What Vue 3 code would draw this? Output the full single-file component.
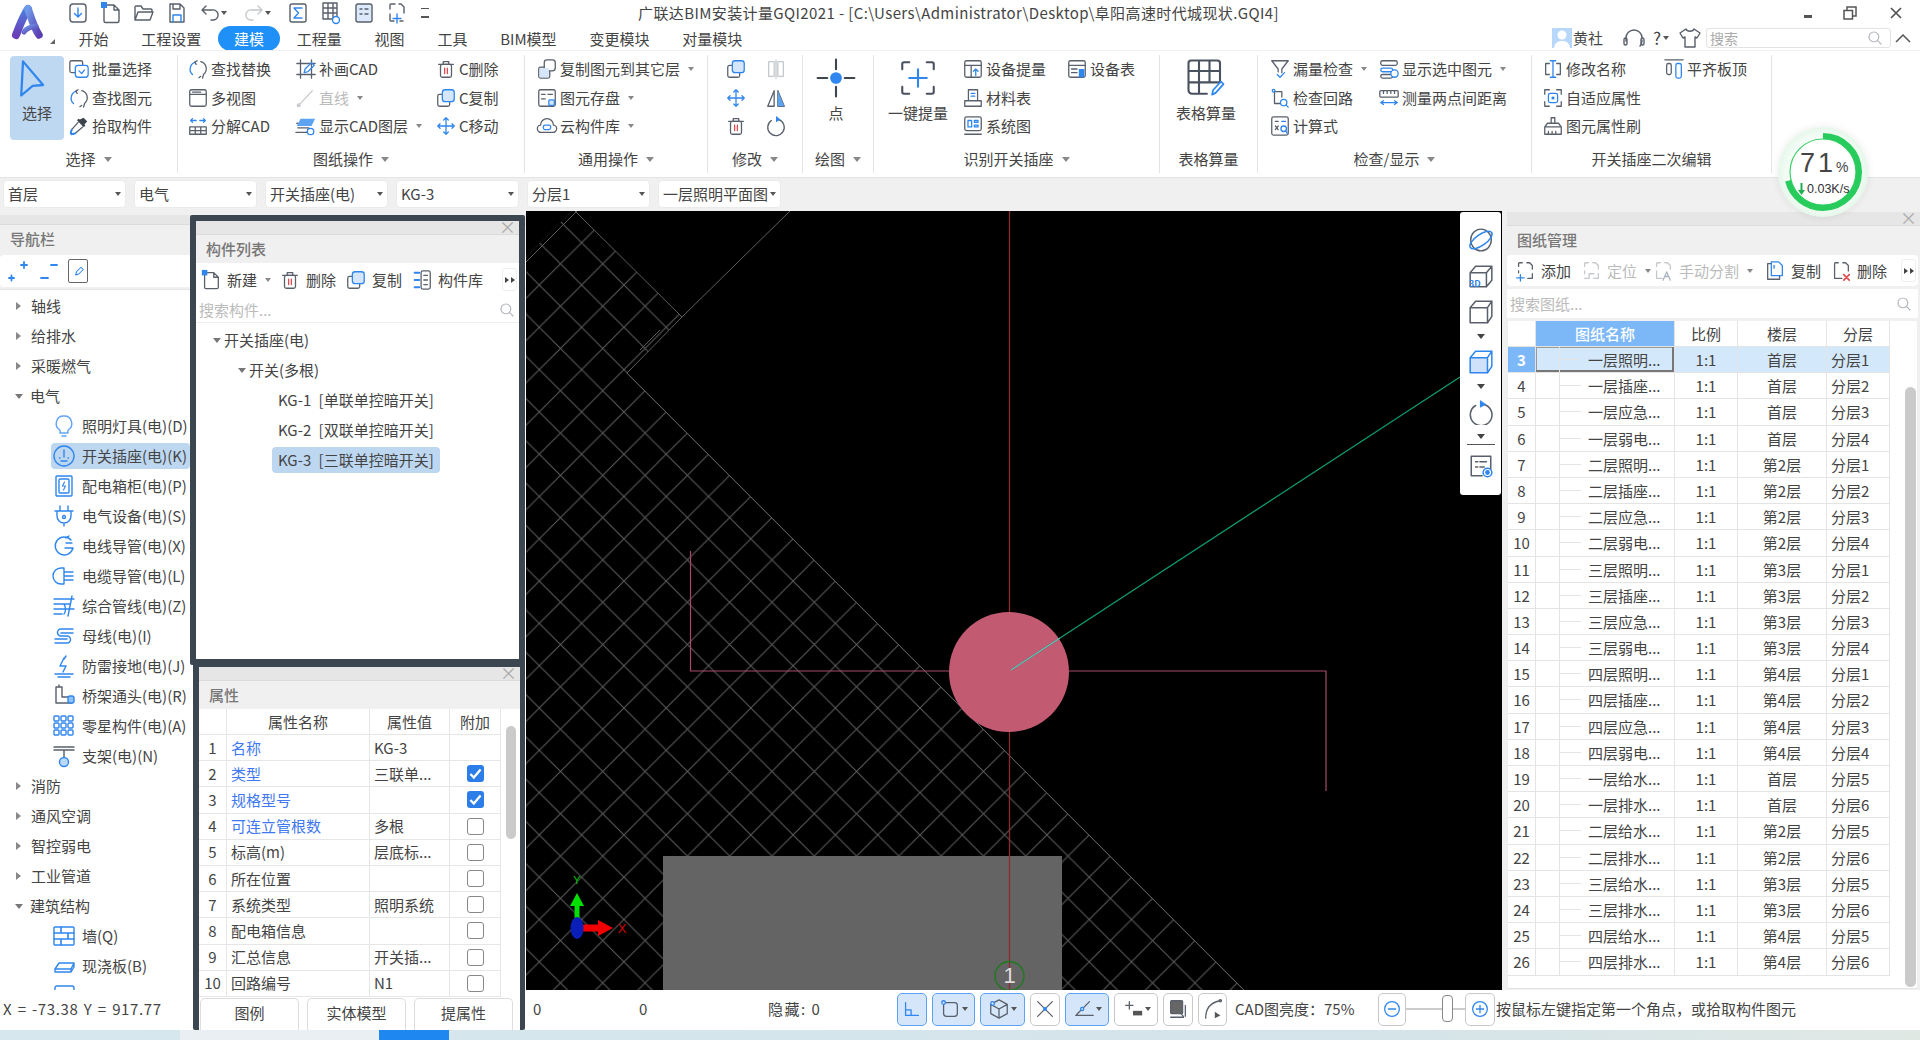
<script setup>
const G = '#59606b', B = '#2f86ee', L = '#c4c8cc', R = '#e5484d'
const s = (d, c = G, w = 1.4) => `<path d="${d}" fill="none" stroke="${c}" stroke-width="${w}" stroke-linecap="round" stroke-linejoin="round"/>`
const f = (d, c = B) => `<path d="${d}" fill="${c}"/>`
const r = (x, y, w, h, rx = 2, c = G, fill = 'none', sw = 1.4) => `<rect x="${x}" y="${y}" width="${w}" height="${h}" rx="${rx}" fill="${fill}" stroke="${c}" stroke-width="${sw}"/>`
const c = (x, y, rad, col = B, fill = 'none', sw = 1.4) => `<circle cx="${x}" cy="${y}" r="${rad}" fill="${fill}" stroke="${col}" stroke-width="${sw}"/>`
const trash = r(6, 7, 12, 14, 2) + s('M4 7h16M9 7V4h6v3') + s('M10.5 11v6M13.5 11v6', R)
const copy = r(3, 8, 13, 13, 2) + r(8, 3, 13, 13, 3, B, '#d5e6fb')
const move = s('M12 3v18M3 12h18M9.5 5.5 12 3l2.5 2.5M9.5 18.5 12 21l2.5-2.5M5.5 9.5 3 12l2.5 2.5M18.5 9.5 21 12l-2.5 2.5', B)
const loop = s('M9 4.5A8 8 0 0 0 6 18', B) + s('M15 4a8 8 0 0 1 3 14M15 20l-2 1.5M17 22l1-4') + s('M11 3 8.5 4.5 10 7', G)
const icons = {
  dl: r(4, 3, 16, 18, 3) + s('M12 7v9M8.5 12.5 12 16l3.5-3.5', B),
  newdoc: s('M5 4h10l5 5v11a1.5 1.5 0 0 1-1.5 1.5h-12A1.5 1.5 0 0 1 5 20zM15 4v5h5') + f('M2 1h6v6H2z'),
  open: s('M3 19V6a1 1 0 0 1 1-1h5l2 3h8a1 1 0 0 1 1 1v2M3 19l3-8h15l-3 8z'),
  save: s('M5 3h10l4 4v14H5zM8 3v5h7V3') + s('M8 21v-7h8v7', B),
  undo: s('M8 5 4 9l4 4M4 9h10a5 5 0 0 1 2 10h-3'),
  redo: s('M16 5l4 4-4 4M20 9H10a5 5 0 0 0-2 10h3', L),
  sigma: r(4, 3, 16, 18, 2) + s('M16 7H8l4.5 5L8 17h8', B),
  gridc: s('M4 2h14v16H4zM4 7h14M4 12h14M9 2v16M14 2v16') + c(17, 19, 3.5, B, '#fff'),
  panel: r(4, 3, 16, 18, 2, G, '#dbe9fa') + s('M8 8h2M13 8h3M8 13h2M13 13h3'),
  scan: s('M10 3H6a1 1 0 0 0-1 1v4M14 3h2l3 3v6M5 13v6a1 1 0 0 0 1 1h3M15 20h3') + s('M12 13v9M8 17.5h8', B),
  batch: r(2, 3, 14, 13, 2) + r(8, 8, 14, 13, 3, B, '#fff') + s('M12 14l3 3 3-4', B),
  find: loop,
  pick: f('M17 3l4 4-3 3 1 2-2 1-7-7 1-2 2 1z', '#3c434d') + s('M11 8 4 16l-1 4 1 1 4-1 8-7') + s('M4 16l-1 4 1 1 4-1', B, 2),
  multi: r(3, 3, 18, 18, 2) + s('M3 8h18M6 5.5h9'),
  explode: s('M3 13h18v8H3zM3 17h18M9 13v8M15 13v8') + s('M4 6h6M4 6l2-2M4 6l2 2M20 6h-6M20 6l-2-2M20 6l-2 2', B),
  addcad: s('M6 2v20M18 2v20M2 6h20M2 18h20') + s('M10 16l1-4 7-7 3 3-7 7z', B),
  line: s('M4 20 19 4', L) + c(4, 20, 1.5, L),
  layers: f('M6 4h16l-4 8H2z', '#5ca3f2') + s('M3 14h12l-2 5H1M3 9h-1') + c(17, 18, 3.5, B, '#fff'),
  trash,
  copy,
  move,
  copyto: r(3, 10, 12, 12, 2) + r(9, 2, 12, 12, 3, G, '#fff') + f('M4 11h10v10H4z', '#d5e6fb'),
  save2: r(3, 3, 18, 18, 2) + s('M6 8h4M13 8h5M6 13h4') + r(14, 14, 6, 6, 1, B, '#d5e6fb'),
  cloud: s('M6 19a4 4 0 0 1-1-8 7 7 0 0 1 14 0 4 4 0 0 1-1 8z') + r(8, 11, 8, 5, 2, B),
  mirror: s('M10 21H3L10 4zM14 21h7L14 4z') + f('M14 21h7L14 4z', '#5ca3f2'),
  rotate: s('M7 6a9 9 0 1 0 8-1') + f('M12 1l5 4-5 3z'),
  disableA: s('M4 4h6v16H4zM14 4h6v16h-6zM12 2v20', L),
  point: s('M24 3v11M24 34v11M3 24h11M34 24h11', '#3f4650', 2.4) + c(24, 24, 6, B, B),
  onekey: s('M6 14V8a2 2 0 0 1 2-2h6M34 6h6a2 2 0 0 1 2 2v6M42 34v6a2 2 0 0 1-2 2h-6M14 42H8a2 2 0 0 1-2-2v-6', '#4a5260', 2.4) + s('M24 14v20M14 24h20', B, 2.4),
  tablecalc: s('M4 38V7a3 3 0 0 1 3-3h30a3 3 0 0 1 3 3v22H4M4 16h36M4 29h24M16 4v38M28 4v25M4 38a4 4 0 0 0 4 4h17', '#4a5260', 2.4) + s('M31 43l1-5 9-10 3 3-9 10z', B, 2),
  arrow: s('M8 5 31 32 19 33 6 44z', B, 2.6),
  devq: r(3, 3, 18, 18, 2) + s('M3 8h18M10 8v13') + s('M15 19v-7M12.5 14.5 15 12l2.5 2.5', B),
  material: s('M7 3h10v12H7zM3 15h18v6H3z') + s('M10 7h4M10 10h4', B),
  sysmap: r(3, 2, 18, 15, 2) + s('M3 21h18') + s('M6.5 6h4v7h-4zM13.5 6h4v2h-4zM13.5 11h4v2h-4z', B),
  devt: r(3, 3, 18, 18, 2) + s('M3 8h18M6 12h6M6 16h6') + f('M14 12h6v9h-6z'),
  filter: s('M3 3h18l-7 9v4M3 3l7 9v3') + s('M9 18l3 3 5-5', B),
  showsel: r(3, 3, 18, 5, 2) + r(3, 11, 13, 4, 2, B) + r(3, 18, 13, 4, 2) + c(18, 17, 4, B, '#fff'),
  circuit: s('M6 5v13h6M6 5h8v6') + c(5, 4, 1.5) + c(16, 17, 3.5, B) + s('M19 20l2 2', B),
  ruler: r(2, 4, 20, 7, 1) + s('M6 4v3M10 4v3M14 4v3M18 4v3') + s('M3 17h18M3 17l3-2M3 17l3 2M21 17l-3-2M21 17l-3 2', B),
  formula: r(3, 2, 18, 20, 2) + s('M7 7h3M7 12l3 4M10 12l-3 4') + c(16, 15, 3, B) + s('M14 7h4M18 17l2 3', B),
  rename: s('M12 3v18M9 3h6M9 21h6', B) + s('M8 6H4v12h4M16 6h4v12h-4'),
  fit: s('M3 8V3h5M16 3h5v5M21 16v5h-5M8 21H3v-5', G) + r(7, 7, 10, 10, 2, B) + f('M10.5 10.5h3v3h-3z'),
  brush: s('M3 21v-8h18v8zM3 13l3-4h12l3 4M10 9V3h4v6M7 18v3M11 18v3M15 18v3'),
  align: s('M2 2h20') + r(4, 6, 5, 12, 2) + r(14, 6, 6, 16, 2, B),
  add2: s('M9 3H6a1 1 0 0 0-1 1v3M14 3h3l3 3v4M20 15v5h-5M5 12v2') + s('M7 16v7M3 19.5h8', B),
  loc: s('M9 3H6a1 1 0 0 0-1 1v3M14 3h3l3 3v4M20 15v5h-5M5 12v3M5 20h4M10 15v5M15 15h-5', L),
  split: s('M9 3H6a1 1 0 0 0-1 1v3M14 3h3l3 3v4M5 12v8h6', L) + s('M12 22l4-9 4 9M14 18h4', '#aab4c0'),
  copy3: s('M8 4h-4v17h13v-4') + s('M8 2h8l4 4v11H8z', B) + s('M11 6v3', B),
  delx: s('M9 3H6a1 1 0 0 0-1 1v16h8M14 3h3l3 3v6') + s('M15 16l6 6M21 16l-6 6', R, 1.8),
  lib: s('M4 4h5M4 12h5M4 20h5', B, 2.2) + r(11, 2, 10, 20, 2) + s('M14 7h4M14 12h4M14 17h4'),
  plus2: s('M3 19h5M5.5 16.5v5M15 6h6M18 3v6', B, 1.8),
  minus2: s('M4 19h7M14 6h6', B, 1.8),
  edit: s('M9 17l1-4 6-6 3 3-6 6z', B) + s('M9 17h2', B),
  orbit: `<ellipse cx="12" cy="12" rx="9.5" ry="10" fill="none" stroke="${G}" stroke-width="1.3"/>` + `<ellipse cx="12" cy="12" rx="12" ry="5" transform="rotate(-35 12 12)" fill="none" stroke="${B}" stroke-width="1.4"/>`,
  cube3d: s('M2 9h15v13H2zM2 9l5-6h15v13l-5 6M17 9l5-6'),
  cube: s('M2 8h16v14H2zM2 8l5-6h15v14l-4 6M18 8l4-6', G),
  cubeb: `<path d="M2 8h16v14H2z" fill="#cfe2fa"/>` + s('M2 8h16v14H2zM2 8l5-6h15v14l-4 6M18 8l4-6', B),
  rot: s('M7 6a10 10 0 1 0 8-1') + f('M11 1l6 4-6 3z'),
  listeye: s('M3 3h18v12M3 3v18h10M7 8h2M11 8h6M7 13h2M11 13h4') + c(18, 18, 4, B) + c(18, 18, 1.5, B, B),
  bulb: s('M12 2a7.5 7.5 0 0 0-4 14v3h8v-3a7.5 7.5 0 0 0-4-14zM10 22h4', '#62a4f2'),
  socket: c(12, 12, 10, B) + s('M12 6v7M7.5 14h.5M16 14h.5M9 17h6', B),
  box: r(4, 2, 16, 20, 1, B) + r(7, 5, 10, 14, 1, B) + s('M12.5 8l-2 4h3l-2 4', B, 1.1),
  plug: s('M8 2v5M16 2v5M3 7h18M5 7v5a7 7 0 0 0 14 0V7M12 19v3', B) + c(12, 13, 1.5, B),
  wire: s('M19 6a9 9 0 1 0 2 8h-8M14 4l3-2M14 9h6', B),
  cable: s('M12 4H9a8 8 0 0 0 0 16h3M12 8h9M12 12h9M12 16h9M12 4v16', B),
  combo: s('M2 5h20M2 10h16M2 15h20M2 20h8M20 2l-4 20M12 10c2 3 2 8 0 10', B),
  bus: s('M21 5H9a3.5 3.5 0 0 0 0 7h6a3.5 3.5 0 0 1 0 7H3M21 9H9M3 15h12', B, 1.5),
  thunder: s('M3 20h18M6 23h12M12 4l-4 8h6l-3 6', B) + s('M14 2l-2 3', B),
  bridge: s('M4 3h6v10h10v6H4zM7 3V1') + r(16, 12, 6, 7, 2, B, '#8fc0f6'),
  parts: [3, 10, 17].flatMap(x => [3, 10, 17].map(y => r(x - 1, y - 1, 5, 5, 1, B))).join(''),
  support: s('M2 3h20M2 6h20M12 6v8', G) + c(12, 18, 4.5, B, '#bcd9fa'),
  wall: r(2, 3, 20, 18, 1, B) + s('M2 9h20M2 15h20M9 3v6M16 9v6M9 15v6', B, 1.6),
  slab: s('M3 15l4-6h15v4l-3 5H3zM3 15h16v3M19 15l3-6', B),
  beam: r(3, 2, 19, 6, 2, B),
  bl: s('M5 5v14h14M5 13h6v6', B),
  snap: r(5, 5, 15, 15, 3) + c(5, 5, 2, B, '#cfe2fa'),
  box3: s('M12 2l9 5v10l-9 5-9-5V7zM3 7l9 5 9-5M12 12v10') + c(5, 6, 2, B, '#cfe2fa'),
  cross: s('M4 4l16 16M20 4 4 20') + f('M10 10h4v4h-4z'),
  angle: s('M3 19h19M4 18 18 4', G) + c(10, 12, 1.7, B, '#cfe2fa'),
  plusbar: s('M4 8h8M8 4v8') + f('M12 14h10v5H12z', '#555'),
  stack: r(4, 3, 13, 14, 1, G, '#666') + s('M4 21h14M20 8v12M14 16l4 4'),
  curve: s('M4 22C4 12 8 5 20 3') + c(20, 3, 1.3, G) + f('M14 15l6 4-6 3z', '#555'),
  minus: c(12, 12, 8, B) + s('M8 12h8', B),
  plus: c(12, 12, 8, B) + s('M8 12h8M12 8v8', B),
  search: c(10.5, 10.5, 6.5, '#b4b8bc', 'none', 1.6) + s('M15.5 15.5 20 20', '#b4b8bc', 1.6),
  headset: s('M4 15v-3a8 8 0 0 1 16 0M18 20a8 8 0 0 0 2-6') + r(2, 12, 3, 7, 1.5) + r(19, 12, 3, 7, 1.5),
  shirt: s('M8 3 2 7l3 5 2-1v10h10V11l2 1 3-5-6-4c-1 3-7 3-8 0z'),
  more: f('M1 4l4 3-4 3zM7 4l4 3-4 3z', '#444'),
}
const item = (i, t, dd, dis) => ({ i, t, dd, dis })
const groups = [
  { w: 178, pl: 10, label: '选择', dd: 1, cols: [
    { w: 58, big: { i: 'arrow', t: '选择', active: 1 } },
    { w: 100, items: [item('batch', '批量选择'), item('find', '查找图元'), item('pick', '拾取构件')] } ] },
  { w: 347, pl: 9, label: '图纸操作', dd: 1, cols: [
    { w: 108, items: [item('find', '查找替换'), item('multi', '多视图'), item('explode', '分解CAD')] },
    { w: 140, items: [item('addcad', '补画CAD'), item('line', '直线', 1, 1), item('layers', '显示CAD图层', 1)] },
    { w: 90, items: [item('trash', 'C删除'), item('copy', 'C复制'), item('move', 'C移动')] } ] },
  { w: 183, pl: 11, label: '通用操作', dd: 1, cols: [
    { w: 170, items: [item('copyto', '复制图元到其它层', 1), item('save2', '图元存盘', 1), item('cloud', '云构件库', 1)] } ] },
  { w: 95, pl: 17, label: '修改', dd: 1, cols: [
    { w: 40, items: [item('copy', ''), item('move', ''), item('trash', '')] },
    { w: 30, items: [item('disableA', ''), item('mirror', ''), item('rotate', '')] } ] },
  { w: 71, pl: 0, label: '绘图', dd: 1, cols: [{ w: 66, big: { i: 'point', t: '点' } }] },
  { w: 286, pl: 0, label: '识别开关插座', dd: 1, cols: [
    { w: 88, big: { i: 'onekey', t: '一键提量' } },
    { w: 104, items: [item('devq', '设备提量'), item('material', '材料表'), item('sysmap', '系统图')] },
    { w: 90, items: [item('devt', '设备表')] } ] },
  { w: 98, pl: 0, label: '表格算量', cols: [{ w: 92, big: { i: 'tablecalc', t: '表格算量' } }] },
  { w: 274, pl: 11, label: '检查/显示', dd: 1, cols: [
    { w: 109, items: [item('filter', '漏量检查', 1), item('circuit', '检查回路'), item('formula', '计算式')] },
    { w: 150, items: [item('showsel', '显示选中图元', 1), item('ruler', '测量两点间距离')] } ] },
  { w: 240, pl: 10, label: '开关插座二次编辑', cols: [
    { w: 121, items: [item('rename', '修改名称'), item('fit', '自适应属性'), item('brush', '图元属性刷')] },
    { w: 100, items: [item('align', '平齐板顶')] } ] },
]
const tabs = ['开始', '工程设置', '建模', '工程量', '视图', '工具', 'BIM模型', '变更模块', '对量模块']
const quick = [['dl'], ['newdoc'], ['open'], ['save'], ['undo', 1], ['redo', 1], ['sigma'], ['gridc'], ['panel'], ['scan']]
const combos = ['首层', '电气', '开关插座(电)', 'KG-3', '分层1', '一层照明平面图']
const tree = [
  { t: '轴线', a: 'r' }, { t: '给排水', a: 'r' }, { t: '采暖燃气', a: 'r' }, { t: '电气', a: 'd' },
  { t: '照明灯具(电)(D)', i: 'bulb' }, { t: '开关插座(电)(K)', i: 'socket', on: 1 }, { t: '配电箱柜(电)(P)', i: 'box' },
  { t: '电气设备(电)(S)', i: 'plug' }, { t: '电线导管(电)(X)', i: 'wire' }, { t: '电缆导管(电)(L)', i: 'cable' },
  { t: '综合管线(电)(Z)', i: 'combo' }, { t: '母线(电)(I)', i: 'bus' }, { t: '防雷接地(电)(J)', i: 'thunder' },
  { t: '桥架通头(电)(R)', i: 'bridge' }, { t: '零星构件(电)(A)', i: 'parts' }, { t: '支架(电)(N)', i: 'support' },
  { t: '消防', a: 'r' }, { t: '通风空调', a: 'r' }, { t: '智控弱电', a: 'r' }, { t: '工业管道', a: 'r' }, { t: '建筑结构', a: 'd' },
  { t: '墙(Q)', i: 'wall' }, { t: '现浇板(B)', i: 'slab' }, { t: '', i: 'beam' },
]
const props = [
  ['名称', 'KG-3', null, 1], ['类型', '三联单...', true, 1], ['规格型号', '', true, 1], ['可连立管根数', '多根', false, 1],
  ['标高(m)', '层底标...', false], ['所在位置', '', false], ['系统类型', '照明系统', false], ['配电箱信息', '', false],
  ['汇总信息', '开关插...', false], ['回路编号', 'N1', false],
]
const floors = ['一', '二', '三', '四']
const kinds = ['照明', '插座', '应急', '弱电']
const fl = ['首层', '第2层', '第3层', '第4层']
const sheets = []
let no = 3
floors.forEach((a, i) => kinds.forEach((k, j) => sheets.push({ no: no++, n: a + '层' + k + '...', fl: fl[i], p: '分层' + (j + 1) })))
floors.forEach((a, i) => ['给水', '排水'].forEach((k, j) => sheets.push({ no: no++, n: a + '层' + k + '...', fl: fl[i], p: '分层' + (j + 5) })))
const stBtns = [
  { i: 'bl', w: 30, on: 1 }, { i: 'snap', w: 43, on: 1, dd: 1 }, { i: 'box3', w: 45, on: 1, dd: 1 }, { i: 'cross', w: 30 },
  { i: 'angle', w: 44, on: 1, dd: 1 }, { i: 'plusbar', w: 44, dd: 1 }, { i: 'stack', w: 30 }, { i: 'curve', w: 29 },
]
</script>

<template>
  <div class="app">
    <header class="head">
      <div class="logo">
        <svg width="42" height="40" viewBox="0 0 42 40">
          <defs>
            <linearGradient id="lg" x1="0" y1="0" x2="1" y2="1"><stop offset="0" stop-color="#6f9be8"/><stop offset="1" stop-color="#5b3db2"/></linearGradient>
            <linearGradient id="lg2" x1="0" y1="0" x2="0" y2="1"><stop offset="0" stop-color="#4f7fe0"/><stop offset="1" stop-color="#6a3fb8"/></linearGradient>
          </defs>
          <path d="M7 33C10 25 15 13 19 7" fill="none" stroke="url(#lg2)" stroke-width="8" stroke-linecap="round"/>
          <path d="M19 7C22 14 24 24 30 33" fill="none" stroke="url(#lg)" stroke-width="7.500" stroke-linecap="round"/>
          <path d="M15 30C18 25 23 25 27 24" fill="none" stroke="url(#lg)" stroke-width="5" stroke-linecap="round"/>
        </svg>
        <i class="logo-mark"></i>
      </div>
      <div class="head-main">
        <div class="title-row">
          <div class="quick">
            <span v-for="(q, k) in quick" :key="k" class="quick-b" :class="{ wide: q[1] }">
              <svg class="ic24" viewBox="0 0 24 24" v-html="icons[q[0]]"></svg>
              <i v-if="q[1]" class="caret"></i>
            </span>
            <i class="more-q"></i>
          </div>
          <div class="title">广联达BIM安装计量GQI2021 - [C:\Users\Administrator\Desktop\阜阳高速时代城现状.GQI4]</div>
          <div class="winctl">
            <i class="w-min"></i>
            <svg width="14" height="14" viewBox="0 0 14 14"><path d="M1 4.500h8.500v8.500H1zM4 4V1h9v9h-3" fill="none" stroke="#555" stroke-width="1.500"/></svg>
            <svg width="14" height="14" viewBox="0 0 14 14"><path d="M2 2l10 10M12 2 2 12" stroke="#555" stroke-width="1.700"/></svg>
          </div>
        </div>
        <div class="tab-row">
          <span v-for="t in tabs" :key="t" class="tab" :class="{ on: t === '建模' }">{{ t }}</span>
          <div class="user">
            <span class="avatar"><svg width="20" height="20" viewBox="0 0 20 20"><circle cx="10" cy="7" r="4.500" fill="#fff"/><path d="M2 20c1-6 4-7 8-7s7 1 8 7z" fill="#fff"/></svg></span>
            <span class="uname">黄社</span>
            <svg class="ic24 hs" viewBox="0 0 24 24" v-html="icons.headset"></svg>
            <span class="help">?</span><i class="caret tiny"></i>
            <svg class="ic24 sh" viewBox="0 0 24 24" v-html="icons.shirt"></svg>
            <span class="top-search">搜索<svg width="18" height="18" viewBox="0 0 24 24" v-html="icons.search"></svg></span>
            <svg class="chev" width="16" height="10" viewBox="0 0 16 10"><path d="M1 9l7-7 7 7" fill="none" stroke="#555" stroke-width="1.500"/></svg>
          </div>
        </div>
      </div>
    </header>

    <section class="ribbon">
      <div v-for="g in groups" :key="g.label" class="group" :style="{ width: g.w + 'px' }">
        <div class="g-body" :style="{ paddingLeft: g.pl + 'px' }">
          <div v-for="(col, ci) in g.cols" :key="ci" class="g-col" :style="{ width: col.w + 'px' }">
            <div v-if="col.big" class="big" :class="{ active: col.big.active }">
              <svg class="ic40" viewBox="0 0 48 48" v-html="icons[col.big.i]"></svg>
              <span class="big-t">{{ col.big.t }}</span>
            </div>
            <template v-else>
              <div v-for="(it, ii) in col.items" :key="ii" class="r-item" :class="{ dis: it.dis }">
                <svg class="ic22" viewBox="0 0 24 24" v-html="icons[it.i]"></svg>
                <span v-if="it.t" class="r-t">{{ it.t }}</span>
                <i v-if="it.dd" class="caret"></i>
              </div>
            </template>
          </div>
        </div>
        <div class="g-label">{{ g.label }}<i v-if="g.dd" class="caret lab"></i></div>
      </div>
    </section>

    <section class="combos">
      <div v-for="t in combos" :key="t" class="combo"><span class="combo-t">{{ t }}</span><i class="caret dark"></i></div>
    </section>

    <main class="main">
      <aside class="nav">
        <div class="strip"></div>
        <div class="p-title">导航栏</div>
        <div class="nav-tools">
          <svg class="ic24" viewBox="0 0 24 24" v-html="icons.plus2"></svg>
          <svg class="ic24" viewBox="0 0 24 24" v-html="icons.minus2"></svg>
          <span class="edit-b"><svg width="18" height="18" viewBox="0 0 24 24" v-html="icons.edit"></svg></span>
        </div>
        <div class="nav-tree">
          <template v-for="(n, k) in tree" :key="k">
            <div v-if="n.a" class="nav-p"><i :class="n.a === 'r' ? 'tri-r' : 'tri-d'"></i><span>{{ n.t }}</span></div>
            <div v-else class="nav-c" :class="{ on: n.on }"><svg class="ic24" viewBox="0 0 24 24" v-html="icons[n.i]"></svg><span>{{ n.t }}</span></div>
          </template>
        </div>
      </aside>

      <div class="canvas">
        <svg class="cad" width="976" height="779" viewBox="526 211 976 779">
          <defs>
            <pattern id="hatch" patternUnits="userSpaceOnUse" x="539.300" y="285" width="42.300" height="42.300">
              <path d="M0 0 42.300 42.300M42.300 0 0 42.300" stroke="#5e5e5e" stroke-width="1" fill="none"/>
            </pattern>
          </defs>
          <rect x="526" y="211" width="976" height="779" fill="#000"/>
          <path d="M526 257 572 211H575L682 317 627 373 1244 990H526Z" fill="url(#hatch)"/>
          <path d="M526 262 577 211M575 211 682 317 627 373 1244 990M682 317 790 211M640 350 660 330" stroke="#5e5e5e" fill="none"/>
          <rect x="663" y="856" width="399" height="134" fill="#646464"/>
          <path d="M1009.500 211V990" stroke="#8c2a2e" stroke-width="1.300"/>
          <path d="M690.500 551V671H1326V791" stroke="#a84a66" stroke-width="1.200" fill="none"/>
          <circle cx="1009" cy="672" r="60" fill="#c25a72"/>
          <path d="M1011 670 1460 377" stroke="#0f9a70" stroke-width="1.300"/>
          <path d="M1011 670 1060 638" stroke="#7cc" stroke-width="1"/>
          <circle cx="1009.500" cy="976" r="14.500" fill="none" stroke="#1c7a1c" stroke-width="1.300"/>
          <text x="1009.500" y="983" text-anchor="middle" class="cad-n">1</text>
          <path d="M577 928V905" stroke="#00e000" stroke-width="5"/><path d="M570 906 577 893 584 906Z" fill="#00e000"/>
          <path d="M577 928H600" stroke="#f00000" stroke-width="7"/><path d="M598 920 613 928 598 936Z" fill="#f00000"/>
          <ellipse cx="577" cy="928" rx="6.500" ry="11" fill="#0a1fb8"/>
          <text x="577" y="884" text-anchor="middle" class="cad-y">Y</text>
          <text x="622" y="933" text-anchor="middle" class="cad-x">X</text>
        </svg>
        <div class="view-tools">
          <svg class="vt" viewBox="0 0 24 24" v-html="icons.orbit"></svg>
          <svg class="vt" viewBox="0 0 24 24" v-html="icons.cube3d"></svg>
          <svg class="vt" viewBox="0 0 24 24" v-html="icons.cube"></svg>
          <i class="vt-c"></i>
          <svg class="vt" viewBox="0 0 24 24" v-html="icons.cubeb"></svg>
          <i class="vt-c"></i>
          <svg class="vt" viewBox="0 0 24 24" v-html="icons.rot"></svg>
          <i class="vt-c"></i>
          <i class="vt-line"></i>
          <svg class="vt" viewBox="0 0 24 24" v-html="icons.listeye"></svg>
        </div>
        <span class="cube-label">3D</span>
      </div>

      <aside class="sheet">
        <div class="strip"><span class="x">×</span></div>
        <div class="p-title">图纸管理</div>
        <div class="sh-tools">
          <span class="t-b"><svg class="ic22" viewBox="0 0 24 24" v-html="icons.add2"></svg>添加</span>
          <span class="t-b dis m1"><svg class="ic22" viewBox="0 0 24 24" v-html="icons.loc"></svg>定位<i class="caret"></i></span>
          <span class="t-b dis m2"><svg class="ic22" viewBox="0 0 24 24" v-html="icons.split"></svg>手动分割<i class="caret"></i></span>
          <span class="t-b m3"><svg class="ic22" viewBox="0 0 24 24" v-html="icons.copy3"></svg>复制</span>
          <span class="t-b m4"><svg class="ic22" viewBox="0 0 24 24" v-html="icons.delx"></svg>删除</span>
          <span class="more"><svg width="12" height="14" viewBox="0 0 12 14" v-html="icons.more"></svg></span>
        </div>
        <div class="searchbar sh-search">搜索图纸...<svg width="18" height="18" viewBox="0 0 24 24" v-html="icons.search"></svg></div>
        <div class="sh-table">
          <div class="sh-row sh-head">
            <span></span><span class="n-h">图纸名称</span><span>比例</span><span>楼层</span><span>分层</span>
          </div>
          <div v-for="(r0, k) in sheets" :key="r0.no" class="sh-row" :class="{ sel: k === 0 }">
            <span class="sh-no">{{ r0.no }}</span>
            <span class="sh-name"><i class="guide"></i>{{ r0.n }}</span>
            <span>1:1</span><span>{{ r0.fl }}</span><span class="sh-p">{{ r0.p }}</span>
          </div>
          <i class="sh-scroll"></i>
        </div>
      </aside>

      <div class="float comp">
        <div class="strip"><span class="x">×</span></div>
        <div class="p-title">构件列表</div>
        <div class="cp-tools">
          <span class="t-b"><svg class="ic22" viewBox="0 0 24 24" v-html="icons.newdoc"></svg>新建<i class="caret"></i></span>
          <span class="t-b c1"><svg class="ic22" viewBox="0 0 24 24" v-html="icons.trash"></svg>删除</span>
          <span class="t-b c2"><svg class="ic22" viewBox="0 0 24 24" v-html="icons.copy"></svg>复制</span>
          <span class="t-b c2"><svg class="ic22" viewBox="0 0 24 24" v-html="icons.lib"></svg>构件库</span>
          <span class="more"><svg width="12" height="14" viewBox="0 0 12 14" v-html="icons.more"></svg></span>
        </div>
        <div class="searchbar cp-search">搜索构件...<svg width="18" height="18" viewBox="0 0 24 24" v-html="icons.search"></svg></div>
        <div class="cp-tree">
          <div class="cp-row l1"><i class="tri-d"></i>开关插座(电)</div>
          <div class="cp-row l2"><i class="tri-d"></i>开关(多根)</div>
          <div class="cp-row l3"><span>KG-1 [单联单控暗开关]</span></div>
          <div class="cp-row l3"><span>KG-2 [双联单控暗开关]</span></div>
          <div class="cp-row l3"><span class="sel">KG-3 [三联单控暗开关]</span></div>
        </div>
      </div>

      <div class="float prop">
        <div class="strip"><span class="x">×</span></div>
        <div class="p-title">属性</div>
        <div class="pr-table">
          <div class="pr-row pr-head"><span></span><span>属性名称</span><span>属性值</span><span>附加</span></div>
          <div v-for="(p, k) in props" :key="k" class="pr-row">
            <span class="pr-no">{{ k + 1 }}</span>
            <span class="pr-n" :class="{ blue: p[3] }">{{ p[0] }}</span>
            <span class="pr-n">{{ p[1] }}</span>
            <span>
              <i v-if="p[2] !== null" class="cb" :class="{ on: p[2] }">
                <svg v-if="p[2]" width="17" height="17" viewBox="0 0 15 15"><path d="M3 8l3 3 6-7" fill="none" stroke="#fff" stroke-width="2"/></svg>
              </i>
            </span>
          </div>
          <i class="pr-scroll"></i>
        </div>
        <div class="pr-foot"><span>图例</span><span>实体模型</span><span>提属性</span></div>
      </div>
    </main>

    <footer class="status">
      <span class="st-x">X = -73.38 Y = 917.77</span>
      <span class="st-a">0</span>
      <span class="st-b">0</span>
      <span class="st-c">隐藏: 0</span>
      <span v-for="(b, k) in stBtns" :key="k" class="st-btn" :class="{ on: b.on }" :style="{ width: b.w + 'px' }">
        <svg class="ic22" viewBox="0 0 24 24" v-html="icons[b.i]"></svg><i v-if="b.dd" class="caret dark"></i>
      </span>
      <span class="st-cad">CAD图亮度：75%</span>
      <span class="st-btn z"><svg class="ic22" viewBox="0 0 24 24" v-html="icons.minus"></svg></span>
      <span class="slider"><i></i></span>
      <span class="st-btn zp"><svg class="ic22" viewBox="0 0 24 24" v-html="icons.plus"></svg></span>
      <span class="st-msg">按鼠标左键指定第一个角点，或拾取构件图元</span>
    </footer>

    <div class="task">
      <i class="t-w"></i><i class="t-b2"></i><span class="clock">12:12</span>
    </div>

    <div class="gauge">
      <svg width="90" height="90" viewBox="0 0 90 90">
        <circle cx="45" cy="45" r="33" fill="none" stroke="#3ad06a" stroke-width="1.200"/>
        <circle cx="45" cy="45" r="36" fill="none" stroke="#28cc5c" stroke-width="6" stroke-dasharray="160.600 226.200" transform="rotate(-90 45 45)"/>
      </svg>
      <div class="g-txt"><span class="g-num">71</span><span class="g-pc">%</span></div>
      <div class="g-sp"><svg class="g-ar" width="7" height="12" viewBox="0 0 7 12"><path d="M3.500 0v8" stroke="#20b050" stroke-width="2"/><path d="M0 7h7l-3.500 5z" fill="#20b050"/></svg>0.03K/s</div>
    </div>
  </div>
</template>

<style>
html, body { margin: 0; padding: 0; background: #f0f0f0; overflow: hidden; }
</style>

<style scoped>
.app { position: relative; width: 1920px; height: 1040px; overflow: hidden; display: flex; flex-direction: column; background: #f0f0f0; color: #444; font: 15px/1.2 "Noto Sans CJK SC", "Liberation Sans", sans-serif; }
i { display: block; font-style: normal; }
.ic24 { width: 24px; height: 24px; flex: none; display: block; }
.ic22 { width: 22px; height: 22px; flex: none; display: block; }
.ic40 { width: 42px; height: 42px; display: block; }
.caret { width: 0; height: 0; border: 3.5px solid transparent; border-top: 4px solid #888; border-bottom: 0; margin-left: 8px; flex: none; }
.caret.dark { border-top-color: #555; }
.caret.tiny { margin: 0 0 0 2px; border-top-color: #555; }

.head { height: 50px; flex: none; display: flex; background: #fff; }
.logo { width: 62px; position: relative; flex: none; }
.logo svg { position: absolute; left: 9px; top: 2px; }
.logo-mark { position: absolute; left: 50px; top: 39px; border-left: 5px solid transparent; border-bottom: 5px solid #666; }
.head-main { flex: 1; display: flex; flex-direction: column; min-width: 0; }
.title-row { height: 26px; display: flex; align-items: center; position: relative; }
.quick { display: flex; align-items: center; margin-left: 4px; width: 572px; flex: none; }
.quick-b { width: 33px; display: flex; align-items: center; flex: none; }
.quick-b.wide { width: 44px; }
.quick-b.wide .caret { margin-left: -1px; border-top-color: #555; }
.more-q { width: 8px; height: 7px; margin-left: 3px; border-top: 1px solid #555; border-bottom: 2px solid #555; }
.title { font-size: 15px; white-space: nowrap; color: #444; letter-spacing: .39px; }
.winctl { margin-left: auto; display: flex; align-items: center; gap: 32px; padding-right: 17px; }
.w-min { width: 8px; height: 3px; background: #555; margin-top: 6px; margin-right: -1px; }
.tab-row { height: 24px; display: flex; align-items: center; }
.tab { padding: 0 16.400px; height: 25px; line-height: 25px; border-radius: 13px; white-space: nowrap; }
.tab.on { background: #1e90f8; color: #fff; }
.user { margin-left: auto; display: flex; align-items: center; padding-right: 9px; }
.avatar { width: 20px; height: 20px; background: #b8d8fb; display: block; }
.uname { margin-left: 1px; width: 30px; white-space: nowrap; }
.hs { margin-left: 19px; }
.help { margin-left: 7px; font-size: 17px; }
.sh { margin-left: 9px; }
.top-search { margin-left: 4px; width: 185px; height: 20px; box-sizing: border-box; border: 1px solid #e2e2e2; border-radius: 3px; padding: 0 6px 0 3px; color: #aaa; display: flex; align-items: center; justify-content: space-between; font-size: 14px; }
.chev { margin-left: 4px; }

.ribbon { height: 127px; flex: none; display: flex; background: #fff; box-sizing: border-box; padding: 4px 0 5px; border-top: 1px solid #f0f0f0; }
.group { height: 118px; box-sizing: border-box; border-right: 1px solid #e4e4e4; flex: none; display: flex; flex-direction: column; }
.g-body { height: 89px; display: flex; flex: none; }
.g-col { flex: none; display: flex; flex-direction: column; }
.r-item { height: 28.500px; display: flex; align-items: center; white-space: nowrap; }
.r-t { margin-left: 2px; }
.r-item.dis { color: #bbb; }
.big { display: flex; flex-direction: column; align-items: center; padding-top: 2px; }
.big.active { width: 54px; height: 84px; margin-top: 1px; background: #bfd8f2; border-radius: 4px; padding-top: 1px; box-sizing: border-box; }
.big-t { margin-top: 5px; white-space: nowrap; }
.g-label { height: 30px; line-height: 30px; display: flex; align-items: center; justify-content: center; white-space: nowrap; }
.caret.lab { border-width: 4px; border-top-width: 5px; margin-left: 8px; }

.combos { height: 33px; flex: none; display: flex; gap: 8px; align-items: center; padding-left: 3px; background: #f0f0f0; border-top: 1px solid #e4e4e4; box-sizing: border-box; }
.combo { width: 123px; height: 28px; box-sizing: border-box; background: #fff; border-radius: 4px; border: 1px solid #ebebeb; display: flex; align-items: center; justify-content: space-between; padding: 0 4px; flex: none; }
.combo-t { white-space: nowrap; width: 106px; line-height: 26px; height: 26px; overflow: hidden; }
.combo .caret { margin: 0; }

.main { height: 780px; flex: none; display: flex; position: relative; z-index: 2; }
.strip { height: 14px; background: #e6e6e6; position: relative; border-bottom: 1px solid #dcdcdc; box-sizing: border-box; }
.x { position: absolute; right: 3px; top: -3px; color: #aaa; font-size: 17px; line-height: 17px; }
.p-title { height: 28px; line-height: 27px; padding-left: 10px; background: #f0f0f0; color: #777; font-weight: 500; }

.nav { width: 526px; flex: none; padding-top: 5px; box-sizing: border-box; display: flex; flex-direction: column; }
.nav > .strip { height: 10px; }
.nav-tools { height: 32px; margin-top: 2px; background: #fff; border-radius: 4px; display: flex; align-items: center; padding-left: 6px; gap: 7px; flex: none; }
.edit-b { width: 18px; height: 22px; border: 1px solid #666; border-radius: 2px; display: flex; align-items: center; justify-content: center; }
.nav-tree { margin-top: 2px; background: #fff; flex: 1; overflow: hidden; border-top: 1px solid #e6e6e6; }
.nav-p, .nav-c { height: 30px; display: flex; align-items: center; white-space: nowrap; }
.nav-p { padding-left: 15px; }
.nav-p span { margin-left: 7px; }
.nav-tree > .nav-p:first-child { margin-top: 1px; }
.nav-c { margin-left: 51px; padding-left: 1px; width: 139px; box-sizing: border-box; }
.nav-c span { margin-left: 6px; }
.nav-c.on { background: #bdd7f1; border-radius: 4px; height: 26px; margin-top: 2px; margin-bottom: 2px; }
.tri-r { width: 0; height: 0; border: 4px solid transparent; border-left: 5px solid #888; border-right: 0; margin-left: 1px; margin-right: 3px; }
.tri-d { width: 0; height: 0; border: 4.500px solid transparent; border-top: 5px solid #777; border-bottom: 0; }

.canvas { width: 976px; flex: none; position: relative; margin-top: 1px; background: #000; height: 779px; }
.cad { display: block; }
.cad-n { fill: #ddd; font: 22px "Liberation Sans", sans-serif; }
.cad-y { fill: #00c000; font: 11px "Liberation Sans", sans-serif; }
.cad-x { fill: #d00000; font: 13px "Liberation Sans", sans-serif; }
.view-tools { position: absolute; left: 934px; top: 1px; width: 41px; height: 283px; background: #fff; border-radius: 3px; display: flex; flex-direction: column; align-items: center; padding-top: 15px; box-sizing: border-box; }
.vt { width: 26px; height: 26px; flex: none; display: block; margin-bottom: 10px; }
.vt-c { width: 0; height: 0; border: 4.500px solid transparent; border-top: 5px solid #444; border-bottom: 0; margin: -1px 0 10px; }
.vt-line { width: 28px; height: 1px; background: #555; margin: -5px 0 8px; }
.cube-label { position: absolute; left: 943px; top: 68px; font-size: 9px; line-height: 10px; font-weight: 700; color: #2f86ee; }

.sheet { flex: 1; min-width: 0; padding: 2px 2px 1px 5px; box-sizing: border-box; display: flex; flex-direction: column; }
.sheet > .strip { margin-right: -2px; }
.sh-tools { height: 31px; margin-top: 1px; background: #fff; border-radius: 4px; display: flex; align-items: center; padding-left: 7px; position: relative; flex: none; }
.t-b { display: flex; align-items: center; white-space: nowrap; }
.t-b .ic22 { margin-right: 5px; }
.t-b.dis { color: #bbb; }
.m1 { margin-left: 9px; }
.m2 { margin-left: 1px; }
.m3 { margin-left: 11px; }
.m4 { margin-left: 9px; }
.more { position: absolute; right: 2px; top: 4px; width: 15px; height: 23px; background: #fff; border: 1px solid #eee; border-radius: 3px; box-sizing: border-box; display: flex; align-items: center; justify-content: center; }
.searchbar { background: #fff; color: #bbb; display: flex; align-items: center; justify-content: space-between; flex: none; box-sizing: border-box; }
.sh-search { height: 29px; margin-top: 3px; padding: 0 5px 0 3px; }
.sh-table { margin-top: 3px; flex: 1; background: #fff; position: relative; overflow: hidden; border-bottom: 1px solid #e4e4e4; border-left: 1px solid #eee; border-right: 1px solid #eee; box-sizing: border-box; }
.sh-row { display: grid; grid-template-columns: 28px 139px 63px 89px 63px; width: 382px; height: 26.200px; line-height: 26px; text-align: center; }
.sh-row > span { border-right: 1px solid #e4e4e4; border-bottom: 1px solid #e4e4e4; box-sizing: border-box; white-space: nowrap; overflow: hidden; }
.sh-head { height: 26px; }
.n-h { background: #7cb8f8; color: #fff; font-weight: 500; }
.sh-name { text-align: left; padding-left: 52px; position: relative; }
.guide { position: absolute; left: 23px; top: 0; bottom: 0; width: 21px; height: 100%; border-left: 1px solid #e4e4e4; }
.guide::after { content: ""; position: absolute; left: 0; right: 0; top: 12px; height: 1px; background: #e4e4e4; }
.sh-p { text-align: left; padding-left: 4px; }
.sel > span { background: #d4e8fc; }
.sel .sh-no { background: #7cb8f8; color: #fff; font-weight: 700; }
.sel .sh-name { box-shadow: inset -2px -2px 0 #777, inset 1px 1px 0 #999; }
.sh-scroll { position: absolute; right: 1px; top: 66px; width: 11px; height: 600px; background: #cacaca; border-radius: 6px; }

.float { position: absolute; background: #fff; border: 6px solid #3c4650; box-sizing: border-box; border-radius: 2px; display: flex; flex-direction: column; }
.comp { left: 190px; top: 5px; width: 335px; height: 450px; }
.prop { left: 193px; top: 450px; width: 332px; height: 370px; border-width: 7px 5px 0 6px; z-index: 3; }
.cp-tools { height: 31px; margin-top: 1px; background: #fff; display: flex; align-items: center; padding-left: 4px; position: relative; flex: none; }
.c1 { margin-left: 8px; }
.c2 { margin-left: 9px; }
.cp-search { height: 26px; padding: 0 3px; margin-top: 2px; border-bottom: 1px solid #eee; }
.cp-tree { flex: 1; padding-top: 2px; }
.cp-row { height: 30px; display: flex; align-items: center; white-space: nowrap; }
.l1 { padding-left: 17px; }
.l2 { padding-left: 42px; }
.cp-row .tri-d { margin-right: 3px; }
.l3 { padding-left: 76px; }
.l3 span { padding: 0 6px; height: 26px; line-height: 26px; border-radius: 4px; word-spacing: 4px; }
.l3 .sel { background: #bdd7f1; }
.prop .p-title { height: 28px; }
.pr-table { position: relative; flex: 1; overflow: hidden; }
.pr-row { display: grid; grid-template-columns: 28px 143px 80px 51px; width: 302px; height: 26.200px; line-height: 26px; }
.pr-row > span { border-right: 1px solid #e6e6e6; border-bottom: 1px solid #e6e6e6; box-sizing: border-box; white-space: nowrap; overflow: hidden; display: flex; align-items: center; }
.pr-head { height: 26px; }
.pr-head > span { justify-content: center; }
.pr-no { justify-content: center; }
.pr-n { padding-left: 4px; }
.blue { color: #3f78f0; }
.pr-row > span:last-child { justify-content: center; }
.cb { width: 17px; height: 17px; box-sizing: border-box; border: 1px solid #888; border-radius: 3px; background: #fff; }
.cb.on { background: #2d7de8; border: 0; }
.cb svg { display: block; }
.pr-scroll { position: absolute; left: 307px; top: 17px; width: 10px; height: 113px; background: #cacaca; border-radius: 5px; }
.pr-foot { height: 32px; flex: none; display: grid; grid-template-columns: 99px 99px 99px; gap: 8px; padding: 1px 0 0 1px; background: #fff; }
.pr-foot span { border: 1px solid #ddd; border-bottom: 0; border-radius: 5px 5px 0 0; text-align: center; line-height: 28px; }

.status { height: 40px; flex: none; display: flex; align-items: center; background: #fff; padding: 0 0 2px 3px; box-sizing: border-box; white-space: nowrap; z-index: 1; }
.st-x { width: 530px; flex: none; letter-spacing: .6px; word-spacing: 1.500px; }
.st-a { width: 106px; flex: none; }
.st-b { width: 129px; flex: none; }
.st-c { width: 129px; flex: none; letter-spacing: 1.500px; }
.st-btn { height: 33px; margin-right: 5px; box-sizing: border-box; flex: none; border: 1px solid #c8c8c8; border-radius: 5px; display: flex; align-items: center; justify-content: center; background: #fff; }
.st-btn.on { background: #d5e6fb; border: 1px solid #5ba3f4; }
.st-btn .caret { margin-left: 1px; }
.st-cad { margin-left: 3px; width: 143px; flex: none; }
.st-btn.z { width: 28px; margin: 0; }
.st-btn.zp { width: 30px; margin: 0; }
.slider { width: 59px; height: 2px; background: #ccc; position: relative; flex: none; }
.slider i { position: absolute; left: 36px; top: -13px; width: 11px; height: 27px; background: #fff; border: 1px solid #888; border-radius: 4px; box-sizing: border-box; }
.st-msg { margin-left: 1px; }

.task { height: 10px; flex: none; position: relative; overflow: hidden; background: linear-gradient(90deg, #d7e7ee, #d4e4ea 70%, #e0e8e4); }
.t-w { position: absolute; left: 180px; top: 0; width: 199px; height: 10px; background: #e9eff2; }
.t-b2 { position: absolute; left: 379px; top: 0; width: 70px; height: 10px; background: #1e88f0; }
.clock { position: absolute; left: 1790px; top: 8px; color: #222; font-size: 14px; line-height: 16px; }

.gauge { position: absolute; left: 1778px; top: 127px; width: 90px; height: 90px; border-radius: 50%; background: radial-gradient(circle, #fff 45%, #e2f6e7 75%, #fff 82%); box-shadow: 0 0 8px rgba(0, 0, 0, .08); z-index: 5; }
.gauge > svg { position: absolute; left: 0; top: 0; }
.g-txt { position: absolute; left: 22px; top: 20px; color: #444; display: flex; align-items: baseline; font-family: "Liberation Sans", sans-serif; }
.g-num { font-size: 27px; line-height: 32px; letter-spacing: 3px; font-weight: 300; }
.g-pc { font-size: 14px; }
.g-sp { position: absolute; left: 20px; top: 54px; font-size: 12.500px; line-height: 16px; color: #333; white-space: nowrap; display: flex; align-items: center; gap: 2px; font-family: "Liberation Sans", sans-serif; }
</style>
